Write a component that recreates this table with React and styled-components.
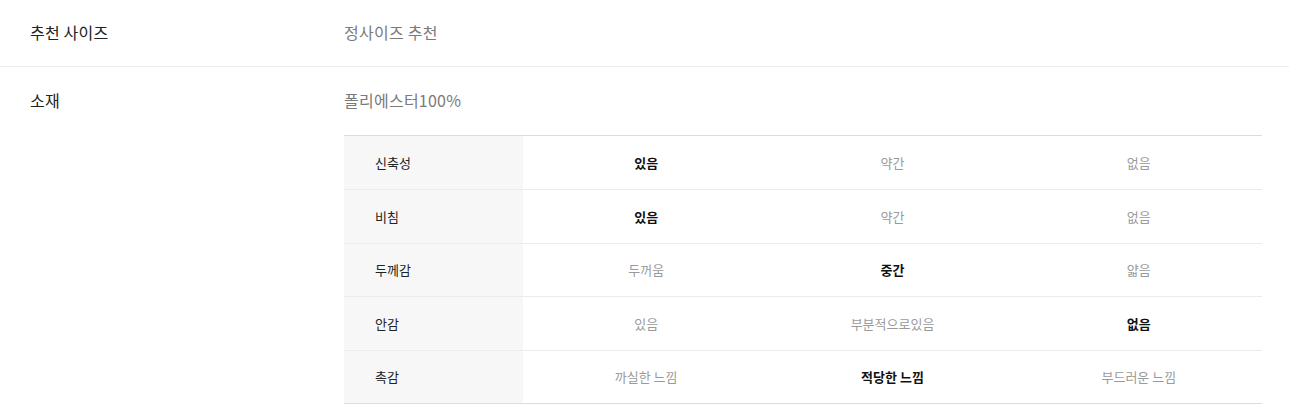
import React from "react";
import styled, { createGlobalStyle } from "styled-components";

const Global = createGlobalStyle`
  html, body { margin: 0; padding: 0; background: #fff; }
  body { font-family: "Noto Sans CJK KR", "Noto Sans", sans-serif; color: #222; }
`;

const Wrap = styled.div`
  width: 1289px;
`;

const InfoRow = styled.div`
  display: grid;
  grid-template-columns: 314px 1fr;
  padding: ${(p) => (p.$first ? "21px 27px 23px 30px" : "22px 27px 22px 30px")};
  border-bottom: ${(p) => (p.$first ? "1px solid #ececec" : "none")};
`;

const Label = styled.div`
  font-size: 16px;
  letter-spacing: 0.2px;
  line-height: 22px;
  color: #222;
`;

const Value = styled.div`
  font-size: 16px;
  letter-spacing: 0.25px;
  line-height: 22px;
  color: #7a7a7a;
`;

const Table = styled.div`
  margin-top: 24px;
  border-top: 1px solid #dcdcdc;
  border-bottom: 1px solid #dcdcdc;
`;

const TRow = styled.div`
  display: grid;
  grid-template-columns: 179px 1fr 1fr 1fr;
  height: 53.4px;
  box-sizing: border-box;
  border-top: ${(p) => (p.$first ? "none" : "1px solid #ebebeb")};
`;

const THead = styled.div`
  background: #f7f7f7;
  display: flex;
  align-items: center;
  padding-left: 31px;
  font-size: 13px;
  color: #222;
`;

const TCell = styled.div`
  display: flex;
  align-items: center;
  justify-content: center;
  font-size: 13px;
  color: ${(p) => (p.$on ? "#111" : "#9a9a9a")};
  font-weight: ${(p) => (p.$on ? 700 : 400)};
`;

const rows = [
  ["신축성", ["있음", "약간", "없음"], 0],
  ["비침", ["있음", "약간", "없음"], 0],
  ["두께감", ["두꺼움", "중간", "얇음"], 1],
  ["안감", ["있음", "부분적으로있음", "없음"], 2],
  ["촉감", ["까실한 느낌", "적당한 느낌", "부드러운 느낌"], 1],
];

export default function App() {
  return (
    <Wrap>
      <Global />
      <InfoRow $first>
        <Label>추천 사이즈</Label>
        <Value>정사이즈 추천</Value>
      </InfoRow>
      <InfoRow>
        <Label>소재</Label>
        <div>
          <Value>폴리에스터100%</Value>
          <Table>
            {rows.map(([name, vals, sel], i) => (
              <TRow key={name} $first={i === 0}>
                <THead>{name}</THead>
                {vals.map((v, j) => (
                  <TCell key={v + j} $on={j === sel}>
                    {v}
                  </TCell>
                ))}
              </TRow>
            ))}
          </Table>
        </div>
      </InfoRow>
    </Wrap>
  );
}
